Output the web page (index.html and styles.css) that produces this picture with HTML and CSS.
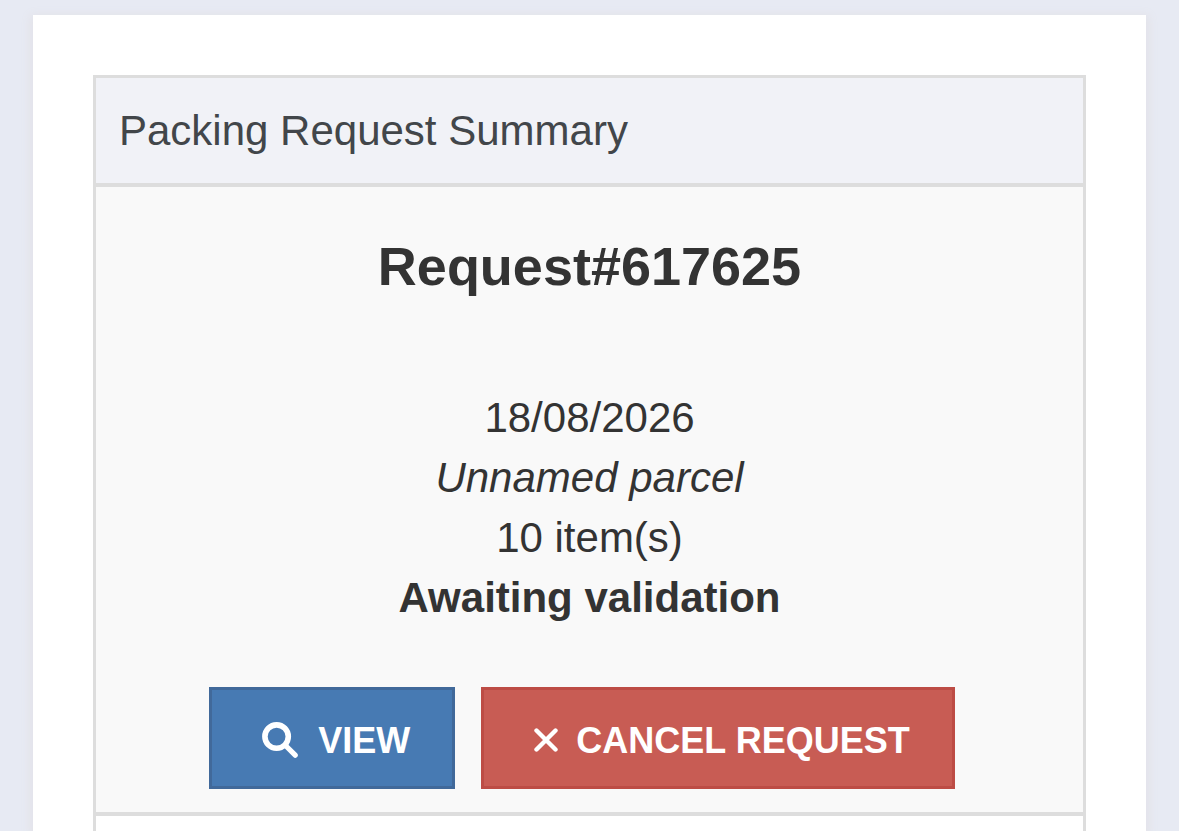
FILE: index.html
```html
<!DOCTYPE html>
<html lang="en">
<head>
<meta charset="utf-8">
<title>Packing Request Summary</title>
<link rel="stylesheet" href="styles.css">
</head>
<body>
<main class="page">
  <section class="panel">
    <h2 class="panel-title">Packing Request Summary</h2>
    <div class="request">
      <h1 class="request-number">Request#617625</h1>
      <div class="details">
        <p>18/08/2026</p>
        <p><em>Unnamed parcel</em></p>
        <p>10 item(s)</p>
        <p><strong>Awaiting validation</strong></p>
      </div>
      <div class="actions">
        <button type="button" class="btn btn-view">
          <svg class="icon-search" viewBox="0 0 36 36" aria-hidden="true"><circle cx="14.6" cy="14.6" r="11.7" fill="none" stroke="currentColor" stroke-width="5.6"/><path d="M23.5 23.5 L33.2 33.2" stroke="currentColor" stroke-width="5.2" stroke-linecap="round"/></svg>
          VIEW
        </button>
        <button type="button" class="btn btn-cancel">
          <svg class="icon-close" viewBox="0 0 24 24" aria-hidden="true"><path d="M2.5 2.5 L21.5 21.5 M21.5 2.5 L2.5 21.5" stroke="currentColor" stroke-width="4.4" stroke-linecap="round"/></svg>
          CANCEL REQUEST
        </button>
      </div>
    </div>
  </section>
</main>
</body>
</html>
```
FILE: styles.css
```css
* {
  box-sizing: border-box;
}

body {
  display: flex;
  flex-direction: column;
  min-height: 100vh;
  margin: 0;
  padding: 15px 33px 0;
  background: #e7eaf3;
  color: #333;
  font-family: "Liberation Sans", Arial, sans-serif;
  font-size: 42px;
  line-height: 60px;
}

.page {
  display: flex;
  flex: 1;
  flex-direction: column;
  padding: 60px 60px 0;
  background: #fff;
  box-shadow: 0 3px 9px 3px #e3e2e8;
}

.panel {
  flex: 1;
  border: 3px solid #ddd;
  border-bottom: 0;
}

.panel-title {
  margin: 0;
  padding: 23px 23px 22px;
  border-bottom: 4px solid #ddd;
  background: #f1f2f7;
  color: #42464a;
  font-size: 42px;
  font-weight: 400;
}

.request {
  padding: 49px 24px 23px;
  border-bottom: 4px solid #ddd;
  background: #f9f9f9;
  text-align: center;
}

.request-number {
  margin: 0 0 92px;
  font-size: 54px;
  line-height: 60px;
}

.details p {
  margin: 0;
}

.actions {
  display: flex;
  justify-content: center;
  gap: 26px;
  margin: 59px 15px 0 0;
}

.btn {
  display: flex;
  align-items: center;
  padding: 25px 42px 19px 50px;
  border: 3px solid;
  color: #fff;
  font: bold 36px/52px "Liberation Sans", Arial, sans-serif;
}

.btn-view {
  border-color: #41699a;
  background: #477ab3;
}

.btn-cancel {
  border-color: #bd4c45;
  background: #c85c54;
}

.icon-search {
  width: 36px;
  height: 36px;
  margin: 0 20px 2px 0;
}

.icon-close {
  width: 24px;
  height: 24px;
  margin: 0 18px 3px 0;
}
```
